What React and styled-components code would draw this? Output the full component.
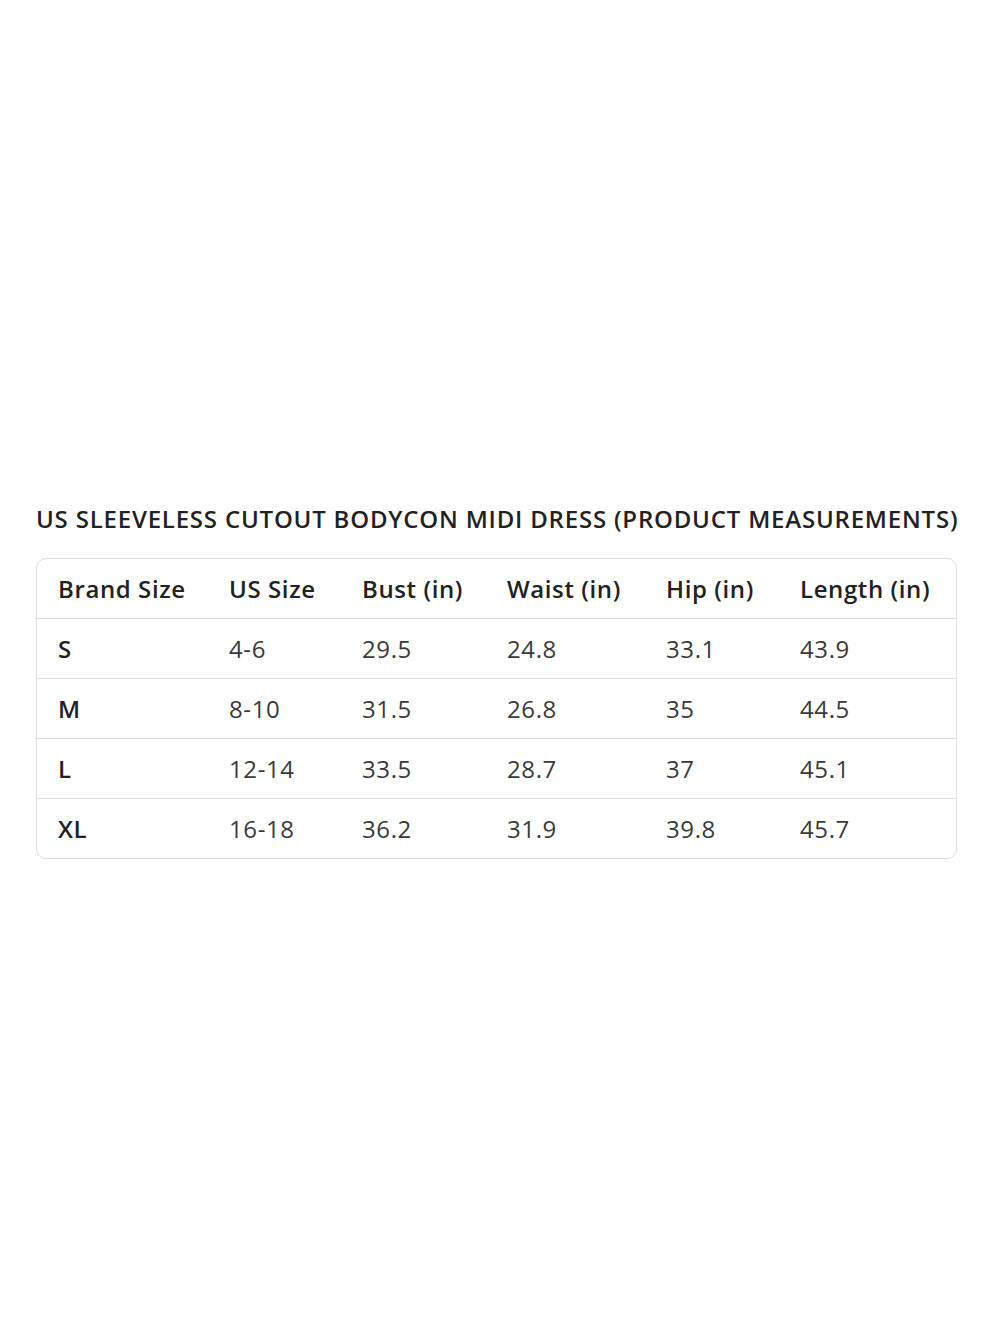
import React from 'react';
import styled, { createGlobalStyle } from 'styled-components';

const GlobalStyle = createGlobalStyle`
  html, body {
    margin: 0;
    padding: 0;
    background: #ffffff;
  }
  body {
    font-family: "Open Sans", "Liberation Sans", sans-serif;
  }
`

const Page = styled.div`
  width: 1000px;
  height: 1333px;
  box-sizing: border-box;
  padding: 501px 43px 0 36px;
`

const Title = styled.h1`
  margin: 0 0 21px 0;
  font-size: 24px;
  line-height: 36px;
  font-weight: 600;
  color: #222;
  white-space: nowrap;
  letter-spacing: 0.8px;
`

const Table = styled.div`
  border: 1px solid #dcdcdc;
  border-radius: 10px;
  overflow: hidden;
`

const Row = styled.div`
  display: grid;
  grid-template-columns: 171px 133px 145px 159px 134px 1fr;
  height: 59px;
  align-items: center;
  padding-left: 21px;
  border-top: ${p => (p.first ? 'none' : '1px solid #dcdcdc')};
`

const Cell = styled.div`
  font-size: 24px;
  color: ${p => (p.bold ? '#222' : '#3a3a3a')};
  font-weight: ${p => (p.bold ? 600 : 400)};
  white-space: nowrap;
  letter-spacing: 0.6px;
`

const headers = ['Brand Size', 'US Size', 'Bust (in)', 'Waist (in)', 'Hip (in)', 'Length (in)']

const rows = [
  ['S', '4-6', '29.5', '24.8', '33.1', '43.9'],
  ['M', '8-10', '31.5', '26.8', '35', '44.5'],
  ['L', '12-14', '33.5', '28.7', '37', '45.1'],
  ['XL', '16-18', '36.2', '31.9', '39.8', '45.7'],
]

export default function App () {
  return (
    <>
      <GlobalStyle />
      <Page>
        <Title>US SLEEVELESS CUTOUT BODYCON MIDI DRESS (PRODUCT MEASUREMENTS)</Title>
        <Table>
          <Row first>
            {headers.map(h => <Cell key={h} bold>{h}</Cell>)}
          </Row>
          {rows.map(r => (
            <Row key={r[0]}>
              {r.map((v, i) => <Cell key={i} bold={i === 0}>{v}</Cell>)}
            </Row>
          ))}
        </Table>
      </Page>
    </>
  )
}
